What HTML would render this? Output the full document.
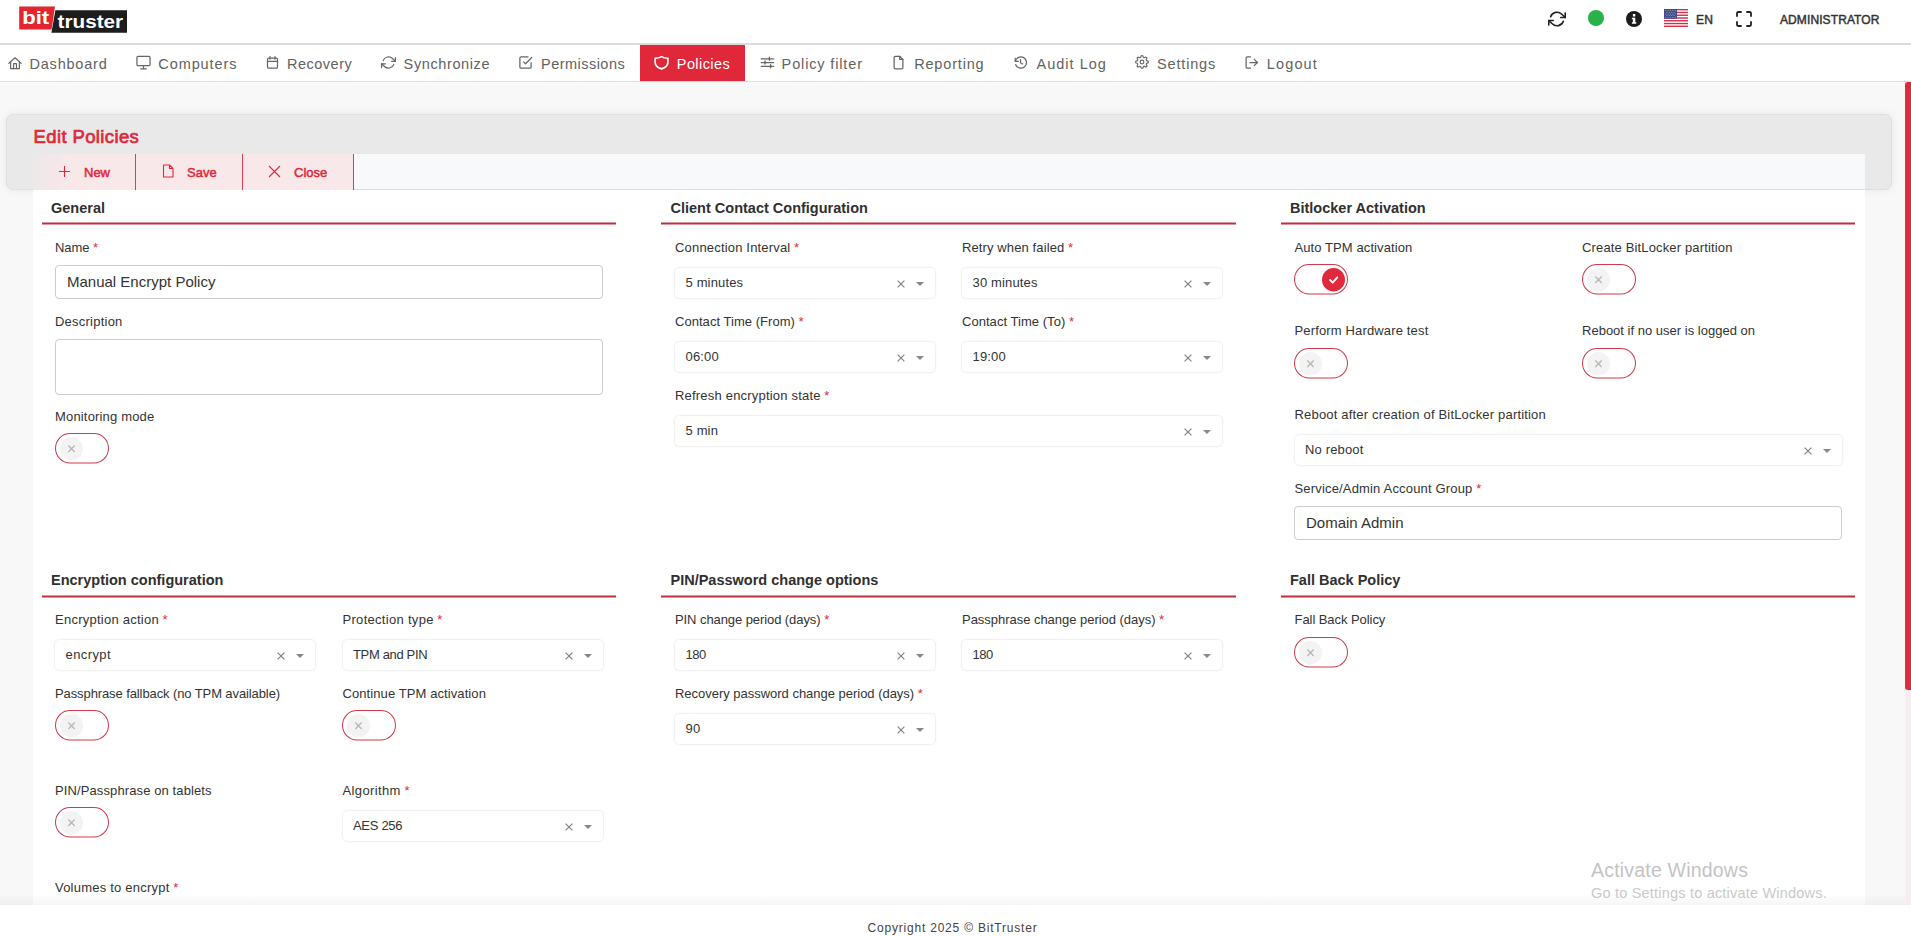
<!DOCTYPE html>
<html lang="en">
<head>
<meta charset="utf-8">
<title>BitTruster - Edit Policies</title>
<style>
*{box-sizing:border-box;margin:0;padding:0}
html,body{width:1911px;height:936px;overflow:hidden}
body{position:relative;background:#f8f8f8;font-family:"Liberation Sans",sans-serif;color:#333;font-size:13px}
.abs{position:absolute}
/* header */
#hdr{position:absolute;left:0;top:0;width:1911px;height:44px;background:#fff}
#hdrline{position:absolute;left:0;top:43px;width:1911px;height:2px;background:#dcdcdc}
#nav{position:absolute;left:0;top:45px;width:1911px;height:36px;background:#fff}
#navline{position:absolute;left:0;top:81px;width:1911px;height:1px;background:#dedede}
.ni{position:absolute;top:0;height:36px;line-height:38px;font-size:14.5px;letter-spacing:1px;color:#626262;white-space:nowrap}
.ni svg{position:absolute;top:10px}
.nic{position:absolute;top:9.800px;width:15px;height:15px;fill:none;stroke:#666;stroke-width:2;stroke-linecap:round;stroke-linejoin:round}
#navact{position:absolute;left:640px;top:0;width:105px;height:36.500px;background:#e0283a}
/* sticky card */
#card{position:absolute;left:6px;top:114px;width:1886px;height:76px;background:#e9e9e9;border:1px solid #dfdfdf;border-radius:7px;box-shadow:0 0 10px rgba(0,0,0,.07)}
#title{position:absolute;left:33.5px;top:126px;font-size:18.5px;color:#e0293b;-webkit-text-stroke:.7px #e0293b;letter-spacing:.38px;white-space:nowrap;line-height:22px}
#tbar{position:absolute;left:33px;top:154px;width:1832px;height:35px;background:#f8f9fa}
.tb{position:absolute;top:154px;height:35.500px;background:#f8e8ea;border-right:1px solid #dd3f51;color:#e0293b;font-weight:bold;font-size:13px;line-height:36px;white-space:nowrap}
.tbt{top:154px;height:35px;line-height:37px;color:#e0293b;-webkit-text-stroke:.5px #e0293b;font-size:13px;white-space:nowrap}
#content{position:absolute;left:33px;top:190px;width:1832px;height:715px;background:#fff}
#footer{position:absolute;left:0;top:905px;width:1911px;padding-right:6px;height:31px;background:#fff;text-align:center;font-size:12px;letter-spacing:.8px;color:#444;line-height:46px}
#fshadow{position:absolute;left:0;top:894px;width:1905px;height:11px;background:linear-gradient(to bottom,rgba(0,0,0,0),rgba(0,0,0,.035))}
/* scrollbar */
#sbtrack{position:absolute;left:1905px;top:82px;width:6px;height:823px;background:#f8eef0}
#sbthumb{position:absolute;left:1905px;top:82px;width:6px;height:608px;background:#e0293b;border-radius:3px 0 0 3px}
/* sections */
.sh{position:absolute;font-size:14.5px;font-weight:bold;color:#303030;white-space:nowrap;line-height:17px}
.sl{position:absolute;height:2px;background:#c22f3c;transform:translateY(.5px)}
.lbl{position:absolute;font-size:13px;color:#333;white-space:nowrap;line-height:16px;letter-spacing:0}
.req{color:#e0293b}
.inp{position:absolute;border:1px solid #ccc;border-radius:4px;background:#fff;font-size:15px;color:#333;padding-left:11px;white-space:nowrap}
.sel{position:absolute;height:30px;border-radius:4px;background:#fff;box-shadow:0 0 0 .5px rgba(0,0,0,.05),0 0 3px rgba(0,0,0,.095);font-size:13px;color:#333;line-height:30px;padding-left:10.500px;white-space:nowrap;letter-spacing:.15px}
.sel .x{position:absolute;right:28.500px;top:10.500px;width:10px;height:10px}
.sel .c{position:absolute;right:10.500px;top:13.500px;width:0;height:0;border-left:4px solid transparent;border-right:4px solid transparent;border-top:4.500px solid #888}
.tg{position:absolute;width:54px;height:30px;transform:scaleY(1.0167);transform-origin:0 0;border:1px solid #d03a4a;border-radius:16px;background:#fff}
.tg .k{position:absolute;left:3.500px;top:2.500px;width:23px;height:23px;border-radius:50%;background:#f3f3f4}
.tg.on .k{left:26.500px;background:#e0293b}
.tg svg{position:absolute;left:0;top:0;width:23px;height:23px}
</style>
</head>
<body>
<div id="hdr">
<svg class="abs" style="left:15px;top:3px" width="120" height="36" viewBox="15 3 120 36">
<polygon points="19.2,6.4 55,6.4 51.6,29.6 19.2,29.6" fill="#e4252f"/>
<polygon points="55.4,10.2 127,10.2 127,32.7 51.4,32.7" fill="#1d1d1d"/>
<text x="22.2" y="24.1" font-family="Liberation Sans, sans-serif" font-weight="bold" font-size="18.800" fill="#fff" textLength="27" lengthAdjust="spacingAndGlyphs">bit</text>
<text x="57.6" y="27.9" font-family="Liberation Sans, sans-serif" font-weight="bold" font-size="19" fill="#fff" textLength="65.5" lengthAdjust="spacingAndGlyphs">truster</text>
</svg>
<!-- refresh -->
<svg class="abs" style="left:1548px;top:10px" width="18" height="18" viewBox="0 0 24 24" fill="none" stroke="#222" stroke-width="2.2" stroke-linecap="round" stroke-linejoin="round"><polyline points="23 4 23 10 17 10"/><polyline points="1 20 1 14 7 14"/><path d="M3.51 9a9 9 0 0 1 14.85-3.36L23 10M1 14l4.64 4.36A9 9 0 0 0 20.49 15"/></svg>
<div class="abs" style="left:1588px;top:10px;width:16px;height:16px;border-radius:50%;background:#28b247"></div>
<!-- info -->
<svg class="abs" style="left:1626px;top:11px" width="16" height="16" viewBox="0 0 16 16"><circle cx="8" cy="8" r="8" fill="#1c1c1c"/><rect x="6.9" y="3" width="2.4" height="2.4" rx=".5" fill="#fff"/><path d="M5.9 6.7h3.4v4.6h1v1.5H5.9v-1.5h1V8.2h-1z" fill="#fff"/></svg>
<!-- flag -->
<svg class="abs" style="left:1664px;top:9px" width="24" height="18" viewBox="0 0 24 18"><rect width="24" height="18" fill="#fff"/><g fill="#cf2f49"><rect y="0" width="24" height="1.4"/><rect y="2.77" width="24" height="1.4"/><rect y="5.54" width="24" height="1.4"/><rect y="8.31" width="24" height="1.4"/><rect y="11.08" width="24" height="1.4"/><rect y="13.85" width="24" height="1.4"/><rect y="16.6" width="24" height="1.4"/></g><rect width="13" height="9.700" fill="#3f4a8a"/><g fill="#fff" opacity=".5" transform="scale(1.18 1)"><circle cx="1.5" cy="1.5" r=".5"/><circle cx="3.5" cy="1.5" r=".5"/><circle cx="5.5" cy="1.5" r=".5"/><circle cx="7.5" cy="1.5" r=".5"/><circle cx="9.5" cy="1.5" r=".5"/><circle cx="2.5" cy="3.2" r=".5"/><circle cx="4.5" cy="3.2" r=".5"/><circle cx="6.5" cy="3.2" r=".5"/><circle cx="8.5" cy="3.2" r=".5"/><circle cx="1.5" cy="4.9" r=".5"/><circle cx="3.5" cy="4.9" r=".5"/><circle cx="5.5" cy="4.9" r=".5"/><circle cx="7.5" cy="4.9" r=".5"/><circle cx="9.5" cy="4.9" r=".5"/><circle cx="2.5" cy="6.6" r=".5"/><circle cx="4.5" cy="6.6" r=".5"/><circle cx="6.5" cy="6.6" r=".5"/><circle cx="8.5" cy="6.6" r=".5"/><circle cx="1.5" cy="8.3" r=".5"/><circle cx="3.5" cy="8.3" r=".5"/><circle cx="5.5" cy="8.3" r=".5"/><circle cx="7.5" cy="8.3" r=".5"/><circle cx="9.5" cy="8.3" r=".5"/></g></svg>
<div class="abs" style="left:1696px;top:13.400px;font-size:12px;color:#333;-webkit-text-stroke:.45px #333;letter-spacing:.2px;line-height:14px">EN</div>
<!-- fullscreen -->
<svg class="abs" style="left:1736px;top:11px" width="16" height="16" viewBox="0 0 16 16" fill="none" stroke="#222" stroke-width="1.8" stroke-linecap="round" stroke-linejoin="round"><path d="M1 5V2.2A1.2 1.2 0 0 1 2.2 1H5M11 1h2.8A1.2 1.2 0 0 1 15 2.2V5M15 11v2.8a1.2 1.2 0 0 1-1.200 1.2H11M5 15H2.2A1.2 1.2 0 0 1 1 13.800V11"/></svg>
<div class="abs" style="left:1780px;top:13.400px;font-size:12px;color:#333;-webkit-text-stroke:.45px #333;letter-spacing:.1px;line-height:14px;white-space:nowrap">ADMINISTRATOR</div>
</div>
<div id="hdrline"></div>
<div id="nav"><div id="navact"></div>
<svg class="nic" style="left:7.500px;top:11px;width:14px;height:14px" viewBox="0 0 24 24"><path d="M1.500 12.500 12 3l10.500 9.500"/><path d="M4.500 10V21.500h15V10"/><path d="M9.500 21.500v-8.500h5v8.500"/></svg>
<div class="ni" style="left:29.5px;letter-spacing:0.79px">Dashboard</div>
<svg class="nic" style="left:135.5px" viewBox="0 0 24 24"><rect x="1.500" y="2" width="21" height="15" rx="2"/><path d="M7.500 22h9M12 17v5"/></svg>
<div class="ni" style="left:158.3px;letter-spacing:0.91px">Computers</div>
<svg class="nic" style="left:264.5px" viewBox="0 0 24 24"><rect x="4" y="5" width="16" height="16" rx="2"/><path d="M4 10h16M8 2.500v4M16 2.500v4"/></svg>
<div class="ni" style="left:287px;letter-spacing:0.5px">Recovery</div>
<svg class="nic" style="left:381px" viewBox="0 0 24 24"><polyline points="23 4 23 10 17 10"/><polyline points="1 20 1 14 7 14"/><path d="M3.51 9a9 9 0 0 1 14.85-3.36L23 10M1 14l4.64 4.36A9 9 0 0 0 20.49 15"/></svg>
<div class="ni" style="left:403.6px;letter-spacing:0.61px">Synchronize</div>
<svg class="nic" style="left:518px" viewBox="0 0 24 24"><polyline points="9 11 12 14 22 4"/><path d="M21 12v7a2 2 0 0 1-2 2H5a2 2 0 0 1-2-2V5a2 2 0 0 1 2-2h11"/></svg>
<div class="ni" style="left:541px;letter-spacing:0.47px">Permissions</div>
<svg class="nic" style="left:654px;stroke:#fff;stroke-width:2.600" viewBox="0 0 24 24"><path d="M12 2.500C9 4.500 5.500 5.200 1.800 5.200v6.300c0 5.800 5 9 10.200 10.700 5.200-1.700 10.200-4.900 10.200-10.700V5.200C18.500 5.200 15 4.500 12 2.500z"/></svg>
<div class="ni" style="left:676.8px;letter-spacing:0.42px;color:#fff">Policies</div>
<svg class="nic" style="left:759.5px" viewBox="0 0 24 24"><path d="M2 6h20M2 12h20M2 18h20"/><path d="M15 3.500v5M8 9.500v5M17 15.500v5" stroke-width="2.200"/></svg>
<div class="ni" style="left:781.6px;letter-spacing:0.86px">Policy filter</div>
<svg class="nic" style="left:891px" viewBox="0 0 24 24"><path d="M14 2H7a2 2 0 0 0-2 2v16a2 2 0 0 0 2 2h10a2 2 0 0 0 2-2V7z"/><polyline points="14 2 14 7 19 7"/></svg>
<div class="ni" style="left:914.2px;letter-spacing:0.82px">Reporting</div>
<svg class="nic" style="left:1012.800px" viewBox="0 0 24 24"><path d="M3.500 5v5h5"/><path d="M3.800 10a9 9 0 1 1 .5 5.500"/><polyline points="12 7.500 12 12.500 15.500 14.500"/></svg>
<div class="ni" style="left:1036.5px;letter-spacing:1.01px">Audit Log</div>
<svg class="nic" style="left:1135px;top:10.300px;width:14px;height:14px" viewBox="0 0 24 24"><circle cx="12" cy="12" r="3.200"/><path d="M19.400 15a1.650 1.650 0 0 0 .330 1.820l.060.060a2 2 0 1 1-2.830 2.830l-.060-.060a1.650 1.650 0 0 0-1.820-.330 1.650 1.650 0 0 0-1 1.510V21a2 2 0 0 1-4 0v-.090A1.650 1.650 0 0 0 9 19.400a1.650 1.650 0 0 0-1.820.330l-.060.060a2 2 0 1 1-2.830-2.830l.060-.060a1.650 1.650 0 0 0 .330-1.820 1.650 1.650 0 0 0-1.510-1H3a2 2 0 0 1 0-4h.090A1.650 1.650 0 0 0 4.600 9a1.650 1.650 0 0 0-.330-1.820l-.060-.060a2 2 0 1 1 2.830-2.830l.060.060a1.650 1.650 0 0 0 1.820.330H9a1.650 1.650 0 0 0 1-1.510V3a2 2 0 0 1 4 0v.090a1.650 1.650 0 0 0 1 1.510 1.650 1.650 0 0 0 1.820-.330l.060-.060a2 2 0 1 1 2.830 2.830l-.060.060a1.650 1.650 0 0 0-.330 1.820V9a1.650 1.650 0 0 0 1.510 1H21a2 2 0 0 1 0 4h-.090a1.650 1.650 0 0 0-1.510 1z"/></svg>
<div class="ni" style="left:1157px;letter-spacing:0.84px">Settings</div>
<svg class="nic" style="left:1243.800px;width:15.500px" viewBox="0 0 24 24"><path d="M10 21H5a2 2 0 0 1-2-2V5a2 2 0 0 1 2-2h5"/><polyline points="16 7 21 12 16 17"/><line x1="21" y1="12" x2="9" y2="12"/></svg>
<div class="ni" style="left:1266.8px;letter-spacing:1.13px">Logout</div>
</div>
<div id="navline"></div>
<div id="card"></div>
<div id="title">Edit Policies</div>
<div id="tbar"></div>
<div id="content"></div>
<div class="tb" style="left:33px;width:103px;background:linear-gradient(to right,#ebe9e9 0,#f3e7e9 14px,#f8e8ea 36px)"></div>
<div class="tb" style="left:136px;width:107px"></div>
<div class="tb" style="left:243px;width:111px"></div>
<svg class="abs" style="left:58px;top:165px" width="13" height="13" viewBox="0 0 13 13"><path d="M6.500 1v11M1 6.500h11" stroke="#e0293b" stroke-width="1.100" fill="none"/></svg>
<div class="abs tbt" style="left:84px">New</div>
<svg class="abs" style="left:162px;top:164px" width="12" height="14" viewBox="0 0 12 14"><path d="M1.500 1h6l3.500 3.500V13h-9.500zM7.500 1v3.500H11" stroke="#e0293b" stroke-width="1.100" fill="none" stroke-linejoin="round"/></svg>
<div class="abs tbt" style="left:187px">Save</div>
<svg class="abs" style="left:268px;top:165px" width="13" height="13" viewBox="0 0 13 13"><path d="M1 1l11 11M12 1L1 12" stroke="#e0293b" stroke-width="1.100" fill="none"/></svg>
<div class="abs tbt" style="left:294px">Close</div>
<div class="sh" style="left:51px;top:199.7px">General</div>
<div class="sl" style="left:42px;top:222px;width:574px"></div>
<div class="sh" style="left:670.5px;top:199.7px">Client Contact Configuration</div>
<div class="sl" style="left:661px;top:222px;width:575px"></div>
<div class="sh" style="left:1290px;top:199.7px">Bitlocker Activation</div>
<div class="sl" style="left:1281px;top:222px;width:574px"></div>
<div class="lbl" style="left:55px;top:239.7px"><span class="t" style="letter-spacing:-0.10px">Name</span> <span class="req">*</span></div>
<div class="inp" style="left:55px;top:265px;width:548px;height:34px;line-height:31px">Manual Encrypt Policy</div>
<div class="lbl" style="left:55px;top:313.8px"><span class="t" style="letter-spacing:0.23px">Description</span></div>
<div class="inp" style="left:55px;top:339px;width:548px;height:56px;line-height:54px"></div>
<div class="lbl" style="left:55px;top:408.9px"><span class="t" style="letter-spacing:0.17px">Monitoring mode</span></div>
<div class="tg" style="left:55px;top:433px"><div class="k"><svg viewBox="0 0 23 23"><path d="M8.300 8.300l6.400 6.400M14.700 8.300l-6.400 6.400" stroke="#b4b4b4" stroke-width="1.200" fill="none"/></svg></div></div>
<div class="lbl" style="left:675px;top:239.7px"><span class="t" style="letter-spacing:0.18px">Connection Interval</span> <span class="req">*</span></div>
<div class="sel" style="left:675px;top:268px;width:259.5px">5 minutes<svg class="x" viewBox="0 0 10 10"><path d="M1.600 1.600l6.800 6.800M8.400 1.600l-6.800 6.800" stroke="#858585" stroke-width="1.250" fill="none"/></svg><i class="c"></i></div>
<div class="lbl" style="left:962px;top:239.7px"><span class="t" style="letter-spacing:0.11px">Retry when failed</span> <span class="req">*</span></div>
<div class="sel" style="left:962px;top:268px;width:259.5px">30 minutes<svg class="x" viewBox="0 0 10 10"><path d="M1.600 1.600l6.800 6.800M8.400 1.600l-6.800 6.800" stroke="#858585" stroke-width="1.250" fill="none"/></svg><i class="c"></i></div>
<div class="lbl" style="left:675px;top:313.8px"><span class="t" style="letter-spacing:0.04px">Contact Time (From)</span> <span class="req">*</span></div>
<div class="sel" style="left:675px;top:342px;width:259.5px">06:00<svg class="x" viewBox="0 0 10 10"><path d="M1.600 1.600l6.800 6.800M8.400 1.600l-6.800 6.800" stroke="#858585" stroke-width="1.250" fill="none"/></svg><i class="c"></i></div>
<div class="lbl" style="left:962px;top:313.8px"><span class="t" style="letter-spacing:0.04px">Contact Time (To)</span> <span class="req">*</span></div>
<div class="sel" style="left:962px;top:342px;width:259.5px">19:00<svg class="x" viewBox="0 0 10 10"><path d="M1.600 1.600l6.800 6.800M8.400 1.600l-6.800 6.800" stroke="#858585" stroke-width="1.250" fill="none"/></svg><i class="c"></i></div>
<div class="lbl" style="left:675px;top:388.0px"><span class="t" style="letter-spacing:0.20px">Refresh encryption state</span> <span class="req">*</span></div>
<div class="sel" style="left:675px;top:416px;width:546.5px">5 min<svg class="x" viewBox="0 0 10 10"><path d="M1.600 1.600l6.800 6.800M8.400 1.600l-6.800 6.800" stroke="#858585" stroke-width="1.250" fill="none"/></svg><i class="c"></i></div>
<div class="lbl" style="left:1294.5px;top:239.7px"><span class="t" style="letter-spacing:0.09px">Auto TPM activation</span></div>
<div class="tg on" style="left:1294px;top:264px"><div class="k"><svg viewBox="0 0 23 23"><path d="M8.200 11.800l2.500 2.500 4.600-5.100" stroke="#fff" stroke-width="2" fill="none" stroke-linecap="round" stroke-linejoin="round"/></svg></div></div>
<div class="lbl" style="left:1582px;top:239.7px"><span class="t" style="letter-spacing:0.15px">Create BitLocker partition</span></div>
<div class="tg" style="left:1582px;top:264px"><div class="k"><svg viewBox="0 0 23 23"><path d="M8.300 8.300l6.400 6.400M14.700 8.300l-6.400 6.400" stroke="#b4b4b4" stroke-width="1.200" fill="none"/></svg></div></div>
<div class="lbl" style="left:1294.5px;top:322.7px"><span class="t" style="letter-spacing:0.15px">Perform Hardware test</span></div>
<div class="tg" style="left:1294px;top:348px"><div class="k"><svg viewBox="0 0 23 23"><path d="M8.300 8.300l6.400 6.400M14.700 8.300l-6.400 6.400" stroke="#b4b4b4" stroke-width="1.200" fill="none"/></svg></div></div>
<div class="lbl" style="left:1582px;top:322.7px"><span class="t" style="letter-spacing:0.01px">Reboot if no user is logged on</span></div>
<div class="tg" style="left:1582px;top:348px"><div class="k"><svg viewBox="0 0 23 23"><path d="M8.300 8.300l6.400 6.400M14.700 8.300l-6.400 6.400" stroke="#b4b4b4" stroke-width="1.200" fill="none"/></svg></div></div>
<div class="lbl" style="left:1294.5px;top:406.7px"><span class="t" style="letter-spacing:0.18px">Reboot after creation of BitLocker partition</span></div>
<div class="sel" style="left:1294.5px;top:435px;width:547px">No reboot<svg class="x" viewBox="0 0 10 10"><path d="M1.600 1.600l6.800 6.800M8.400 1.600l-6.800 6.800" stroke="#858585" stroke-width="1.250" fill="none"/></svg><i class="c"></i></div>
<div class="lbl" style="left:1294.5px;top:480.5px"><span class="t" style="letter-spacing:0.17px">Service/Admin Account Group</span> <span class="req">*</span></div>
<div class="inp" style="left:1294px;top:506px;width:548px;height:34px;line-height:31px">Domain Admin</div>
<div class="sh" style="left:51px;top:571.5px">Encryption configuration</div>
<div class="sl" style="left:42px;top:595px;width:574px"></div>
<div class="sh" style="left:670.5px;top:571.5px">PIN/Password change options</div>
<div class="sl" style="left:661px;top:595px;width:575px"></div>
<div class="sh" style="left:1290px;top:571.5px">Fall Back Policy</div>
<div class="sl" style="left:1281px;top:595px;width:574px"></div>
<div class="lbl" style="left:55px;top:611.8px"><span class="t" style="letter-spacing:0.25px">Encryption action</span> <span class="req">*</span></div>
<div class="sel" style="left:55px;top:640px;width:259.5px;letter-spacing:0.4px">encrypt<svg class="x" viewBox="0 0 10 10"><path d="M1.600 1.600l6.800 6.800M8.400 1.600l-6.800 6.800" stroke="#858585" stroke-width="1.250" fill="none"/></svg><i class="c"></i></div>
<div class="lbl" style="left:342.5px;top:611.8px"><span class="t" style="letter-spacing:0.30px">Protection type</span> <span class="req">*</span></div>
<div class="sel" style="left:342.5px;top:640px;width:260px;letter-spacing:-0.35px">TPM and PIN<svg class="x" viewBox="0 0 10 10"><path d="M1.600 1.600l6.800 6.800M8.400 1.600l-6.800 6.800" stroke="#858585" stroke-width="1.250" fill="none"/></svg><i class="c"></i></div>
<div class="lbl" style="left:55px;top:685.7px"><span class="t" style="letter-spacing:-0.10px">Passphrase fallback (no TPM available)</span></div>
<div class="tg" style="left:55px;top:710px"><div class="k"><svg viewBox="0 0 23 23"><path d="M8.300 8.300l6.400 6.400M14.700 8.300l-6.400 6.400" stroke="#b4b4b4" stroke-width="1.200" fill="none"/></svg></div></div>
<div class="lbl" style="left:342.5px;top:685.7px"><span class="t" style="letter-spacing:0.09px">Continue TPM activation</span></div>
<div class="tg" style="left:342px;top:710px"><div class="k"><svg viewBox="0 0 23 23"><path d="M8.300 8.300l6.400 6.400M14.700 8.300l-6.400 6.400" stroke="#b4b4b4" stroke-width="1.200" fill="none"/></svg></div></div>
<div class="lbl" style="left:55px;top:782.5px"><span class="t" style="letter-spacing:0.11px">PIN/Passphrase on tablets</span></div>
<div class="tg" style="left:55px;top:807px"><div class="k"><svg viewBox="0 0 23 23"><path d="M8.300 8.300l6.400 6.400M14.700 8.300l-6.400 6.400" stroke="#b4b4b4" stroke-width="1.200" fill="none"/></svg></div></div>
<div class="lbl" style="left:342.5px;top:782.5px"><span class="t" style="letter-spacing:0.38px">Algorithm</span> <span class="req">*</span></div>
<div class="sel" style="left:342.5px;top:811px;width:260px;letter-spacing:-0.3px">AES 256<svg class="x" viewBox="0 0 10 10"><path d="M1.600 1.600l6.800 6.800M8.400 1.600l-6.800 6.800" stroke="#858585" stroke-width="1.250" fill="none"/></svg><i class="c"></i></div>
<div class="lbl" style="left:55px;top:879.6px"><span class="t" style="letter-spacing:0.22px">Volumes to encrypt</span> <span class="req">*</span></div>
<div class="lbl" style="left:675px;top:611.8px"><span class="t" style="letter-spacing:-0.08px">PIN change period (days)</span> <span class="req">*</span></div>
<div class="sel" style="left:675px;top:640px;width:259.5px;letter-spacing:-0.5px">180<svg class="x" viewBox="0 0 10 10"><path d="M1.600 1.600l6.800 6.800M8.400 1.600l-6.800 6.800" stroke="#858585" stroke-width="1.250" fill="none"/></svg><i class="c"></i></div>
<div class="lbl" style="left:962px;top:611.8px"><span class="t" style="letter-spacing:-0.03px">Passphrase change period (days)</span> <span class="req">*</span></div>
<div class="sel" style="left:962px;top:640px;width:259.5px;letter-spacing:-0.5px">180<svg class="x" viewBox="0 0 10 10"><path d="M1.600 1.600l6.800 6.800M8.400 1.600l-6.800 6.800" stroke="#858585" stroke-width="1.250" fill="none"/></svg><i class="c"></i></div>
<div class="lbl" style="left:675px;top:685.7px"><span class="t" style="letter-spacing:-0.02px">Recovery password change period (days)</span> <span class="req">*</span></div>
<div class="sel" style="left:675px;top:714px;width:259.5px">90<svg class="x" viewBox="0 0 10 10"><path d="M1.600 1.600l6.800 6.800M8.400 1.600l-6.800 6.800" stroke="#858585" stroke-width="1.250" fill="none"/></svg><i class="c"></i></div>
<div class="lbl" style="left:1294.5px;top:611.5px"><span class="t" style="letter-spacing:-0.06px">Fall Back Policy</span></div>
<div class="tg" style="left:1294px;top:637px"><div class="k"><svg viewBox="0 0 23 23"><path d="M8.300 8.300l6.400 6.400M14.700 8.300l-6.400 6.400" stroke="#b4b4b4" stroke-width="1.200" fill="none"/></svg></div></div>
<div class="abs" style="left:1591px;top:859.300px;font-size:19.5px;color:#c4c4c4;white-space:nowrap;letter-spacing:.2px">Activate Windows</div>
<div class="abs" style="left:1591px;top:885px;font-size:14.5px;color:#cacaca;white-space:nowrap;letter-spacing:.2px">Go to Settings to activate Windows.</div>
<div id="sbtrack"></div>
<div id="sbthumb"></div>
<div id="fshadow"></div>
<div id="footer">Copyright 2025 © BitTruster</div>
</body>
</html>
